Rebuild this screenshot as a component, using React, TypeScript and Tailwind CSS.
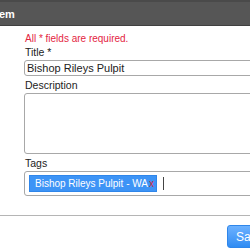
const App = () => {
  return (
    <div
      className="w-[250px] h-[250px] overflow-hidden bg-white text-[10px] text-[#222]"
      style={{ fontFamily: '"Liberation Sans", Arial, sans-serif' }}
    >
      <div className="w-[400px]">
        <div className="h-[26px] bg-[#565656] border-t-2 border-t-[#4a4a4a] border-b border-b-[#404040] flex items-center">
          <span className="text-white font-bold text-[11px] leading-none -ml-[1px] pt-[1px]">em</span>
        </div>

        <div className="pl-[24px] pt-[7px]">
          <div className="text-[#e4253f] leading-[12px] pl-[1px]">All * fields are required.</div>
          <div className="leading-[12px] mt-[1px] pl-[1px] text-[10.5px]">Title *</div>
          <div className="mt-[2px] h-[16px] border border-[#a8a8a8] rounded-[3px] flex items-center px-[2px] leading-none text-[11px]">
            Bishop Rileys Pulpit
          </div>
          <div className="leading-[12px] mt-[3px] pl-[1px] text-[10.5px]">Description</div>
          <div className="mt-[2px] h-[61px] border border-[#a8a8a8] rounded-[3px]" />
          <div className="leading-[12px] mt-[3px] pl-[1px] text-[10.5px]">Tags</div>
          <div className="mt-[2px] h-[25px] border border-[#a8a8a8] rounded-[3px] flex items-center pl-[4px] gap-[4px]">
            <div className="h-[17px] bg-[#3d94f6] border border-[#2f86ea] flex items-center pl-[5px] pr-[2px] text-white leading-none text-[10px]">
              Bishop Rileys Pulpit - WA
              <span className="text-[#d0283c] ml-[1px]">x</span>
            </div>
            <div className="w-px h-[13px] bg-[#444] ml-[2px]" />
          </div>
        </div>

        <div className="mt-[19px] border-t border-[#b5b5b5]" />

        <div className="pl-[227px] pt-[9px]">
          <div className="h-[23px] w-[60px] rounded-[3px] border border-[#2f86ea] bg-gradient-to-b from-[#6cb1ff] to-[#2e8cf3] text-white text-[12px] flex items-center pl-[8px]">
            Save
          </div>
        </div>
      </div>
    </div>
  );
};

export default App;
